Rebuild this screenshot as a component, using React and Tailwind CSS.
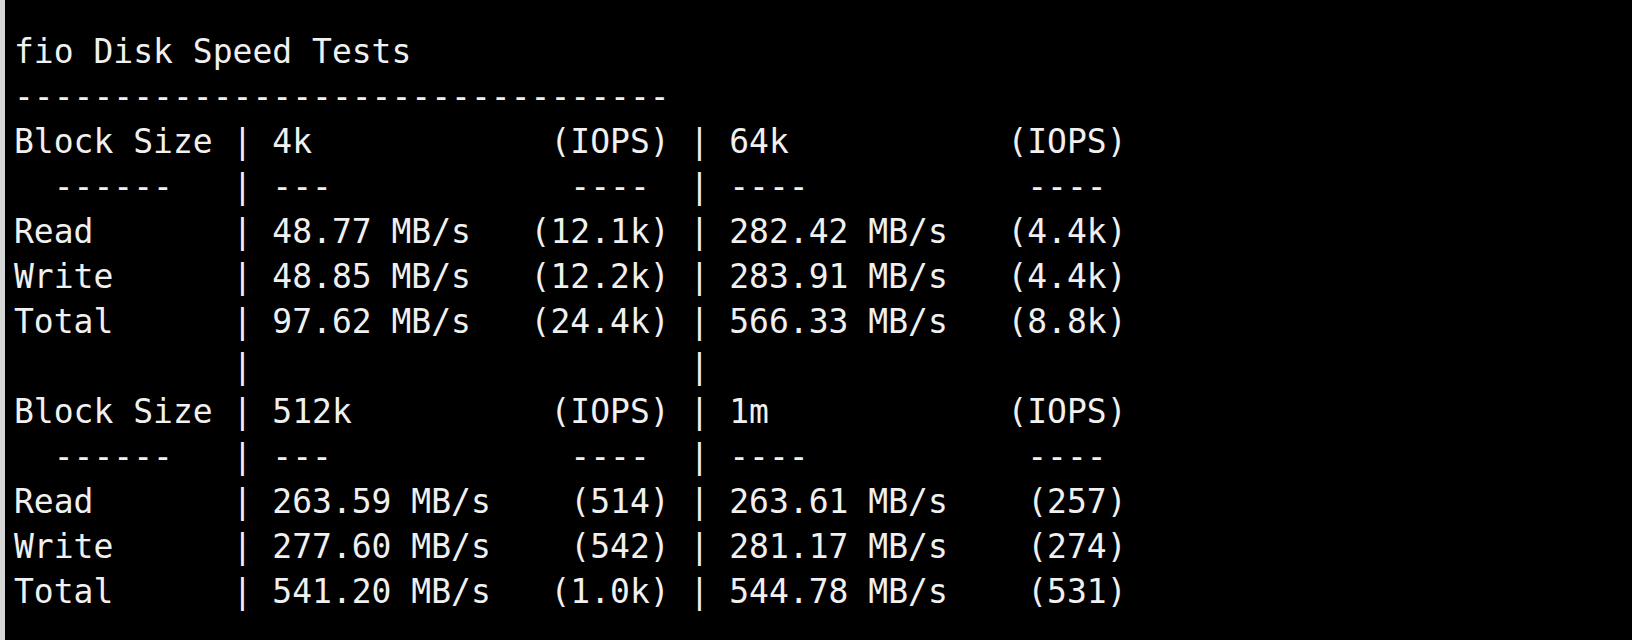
import React from "react";

const fmt = (a, b, c, d, e) =>
  a.padEnd(10) + " | " + b.padEnd(11) + " " + c.padStart(8) + " | " + d.padEnd(11) + " " + e.padStart(8);

const lines = [
  "fio Disk Speed Tests",
  "-".repeat(33),
  fmt("Block Size", "4k", "(IOPS)", "64k", "(IOPS)"),
  fmt("  ------", "---", "---- ", "----", "---- "),
  fmt("Read", "48.77 MB/s", "(12.1k)", "282.42 MB/s", "(4.4k)"),
  fmt("Write", "48.85 MB/s", "(12.2k)", "283.91 MB/s", "(4.4k)"),
  fmt("Total", "97.62 MB/s", "(24.4k)", "566.33 MB/s", "(8.8k)"),
  fmt("", "", "", "", ""),
  fmt("Block Size", "512k", "(IOPS)", "1m", "(IOPS)"),
  fmt("  ------", "---", "---- ", "----", "---- "),
  fmt("Read", "263.59 MB/s", "(514)", "263.61 MB/s", "(257)"),
  fmt("Write", "277.60 MB/s", "(542)", "281.17 MB/s", "(274)"),
  fmt("Total", "541.20 MB/s", "(1.0k)", "544.78 MB/s", "(531)"),
];

export default function App() {
  return (
    <div className="flex h-[640px] w-full overflow-hidden bg-black">
      <div className="w-[5px] shrink-0 bg-[#d6d6d6]" />
      <div
        className="flex flex-col pl-[9px] pt-[29px] text-[33px] leading-[45px] text-[#f0f0f0]"
        style={{ fontFamily: '"DejaVu Sans Mono", "Liberation Mono", monospace' }}
      >
        {lines.map((l, i) => (
          <div key={i} className="whitespace-pre">
            {l}
          </div>
        ))}
      </div>
    </div>
  );
}
